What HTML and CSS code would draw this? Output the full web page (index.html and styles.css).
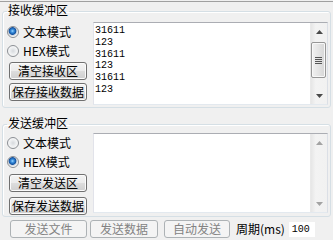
FILE: index.html
```html
<!DOCTYPE html>
<html lang="zh-CN">
<head>
    <meta charset="UTF-8">
    <title>串口缓冲区</title>
    <link rel="stylesheet" href="styles.css">
</head>
<body>
    <div class="topline"></div>

    <fieldset class="group recv">
        <legend>接收缓冲区</legend>
        <div class="group-body">
            <div class="side">
                <label class="opt"><span class="radio on"></span>文本模式</label>
                <label class="opt"><span class="radio"></span>HEX模式</label>
                <button class="btn first">清空接收区</button>
                <button class="btn">保存接收数据</button>
            </div>
            <div class="textbox">
                <div class="lines">31611<br>123<br>31611<br>123<br>31611<br>123</div>
                <div class="vscroll">
                    <div class="sb-btn"><svg width="7" height="4" viewBox="0 0 7 4"><polygon points="3.5,0 7,4 0,4" fill="#4a4a4a"/></svg></div>
                    <div class="sb-track"><div class="thumb"><span class="grip"></span></div></div>
                    <div class="sb-btn"><svg width="7" height="4" viewBox="0 0 7 4"><polygon points="0,0 7,0 3.5,4" fill="#4a4a4a"/></svg></div>
                </div>
            </div>
        </div>
    </fieldset>

    <fieldset class="group send">
        <legend>发送缓冲区</legend>
        <div class="group-body">
            <div class="side">
                <label class="opt"><span class="radio"></span>文本模式</label>
                <label class="opt"><span class="radio on"></span>HEX模式</label>
                <button class="btn first">清空发送区</button>
                <button class="btn">保存发送数据</button>
            </div>
            <div class="textbox">
                <div class="lines"></div>
                <div class="vscroll">
                    <div class="sb-btn"><svg width="7" height="4" viewBox="0 0 7 4"><polygon points="3.5,0 7,4 0,4" fill="#a3a3a3"/></svg></div>
                    <div class="sb-track"></div>
                    <div class="sb-btn"><svg width="7" height="4" viewBox="0 0 7 4"><polygon points="0,0 7,0 3.5,4" fill="#a3a3a3"/></svg></div>
                </div>
            </div>
        </div>
    </fieldset>

    <div class="actions">
        <button class="btn off w-file" disabled>发送文件</button>
        <button class="btn off w-data" disabled>发送数据</button>
        <button class="btn off w-auto" disabled>自动发送</button>
        <span class="period">周期(ms)</span>
        <span class="period-input">100</span>
    </div>
</body>
</html>
```

FILE: styles.css
```css
* {
    box-sizing: border-box;
}
body {
    margin: 0;
    width: 333px;
    height: 240px;
    overflow: hidden;
    background-color: #f0f0f0;
    font-family: "Noto Sans CJK SC", sans-serif;
    font-size: 12px;
    color: #000;
}
.topline {
    height: 1px;
    margin-top: 1px;
    background-color: #a0a0a0;
}
.group {
    margin: 2px 2px 0;
    min-width: 0;
    border: 1px solid #d5dfe5;
    border-radius: 3px;
    box-shadow: inset 1px 1px 0 #fff;
    padding: 4px 2px 2px 4px;
}
.group legend {
    padding: 0 1px 2px;
    font-size: 12px;
    line-height: 12px;
}
.send {
    margin-top: 9px;
    padding-top: 2px;
    padding-bottom: 1px;
}
.group-body {
    display: flex;
    gap: 5px;
}
.side {
    width: 81px;
    display: flex;
    flex-direction: column;
    align-items: flex-start;
}
.opt {
    height: 19px;
    display: flex;
    align-items: center;
    gap: 4px;
    line-height: 12px;
}
.radio {
    width: 12px;
    height: 12px;
    border-radius: 50%;
    border: 1px solid #8b8f94;
    background: radial-gradient(circle at 50% 50%, #d6d9dd 0, #eceef0 3px, #f7f7f7 5px);
}
.radio.on {
    background: radial-gradient(circle at 45% 40%, #9fd8ff 0, #3c92e0 1.5px, #13519f 3.5px, #c9d2dc 4.2px, #f4f4f4 5.5px);
}
.btn {
    height: 18px;
    width: 78px;
    margin-left: 2px;
    padding: 0;
    border: 1px solid #707070;
    border-radius: 3px;
    background: linear-gradient(#f3f3f3 0%, #ebebeb 50%, #dddddd 51%, #cfcfcf 100%);
    box-shadow: inset 0 0 0 1px #fbfbfb;
    font-family: "Noto Sans CJK SC", sans-serif;
    font-size: 12px;
    line-height: 14px;
    color: #000;
}
.btn.first {
    margin-top: 2px;
}
.btn + .btn {
    margin-top: 3px;
}
.send .btn.first {
    margin-top: 3px;
}
.send .btn + .btn {
    margin-top: 5px;
}
.textbox {
    flex: 1;
    height: 83px;
    display: flex;
    background-color: #fff;
    border: 1px solid;
    border-color: #abadb3 #dbdfe6 #e3e9ef #e2e3ea;
}
.send .textbox {
    height: 80px;
}
.lines {
    flex: 1;
    padding: 2px 0 0 1px;
    font-family: "Liberation Mono", monospace;
    font-size: 10px;
    line-height: 11.8px;
}
.vscroll {
    width: 17px;
    display: flex;
    flex-direction: column;
    background: linear-gradient(to right, #e6e6e6, #f3f3f3 30%, #f1f1f1);
    border-left: 1px solid #e9e9e9;
}
.sb-btn {
    height: 17px;
    display: flex;
    align-items: center;
    justify-content: center;
}
.sb-track {
    flex: 1;
    padding: 2px 0 0 0;
}
.thumb {
    height: 36px;
    margin: 0 1px 0 0;
    border: 1px solid #979797;
    border-radius: 2px;
    background: linear-gradient(to right, #f1f1f1, #e4e4e4 50%, #d6d6d6);
    box-shadow: inset 0 0 0 1px #f8f8f8;
    display: flex;
    align-items: center;
    justify-content: center;
}
.grip {
    width: 7px;
    height: 7px;
    background: repeating-linear-gradient(#555 0, #555 1px, transparent 1px, transparent 2px);
}
.actions {
    display: flex;
    align-items: center;
    margin-top: 3px;
    padding-left: 8px;
    height: 18px;
}
.btn.off {
    border-color: #adb2b5;
    background: #f4f4f4;
    box-shadow: none;
    color: #838383;
    margin-top: 0;
}
.w-file {
    width: 77px;
}
.w-data {
    width: 68px;
    margin-left: 3px;
}
.w-auto {
    width: 66px;
    margin-left: 6px;
}
.period {
    margin-left: 6px;
    line-height: 12px;
}
.period-input {
    margin-left: 4px;
    width: 26px;
    height: 15px;
    padding: 0 0 0 3px;
    background-color: #fff;
    font-family: "Liberation Mono", monospace;
    font-size: 10px;
    line-height: 15px;
}
```
